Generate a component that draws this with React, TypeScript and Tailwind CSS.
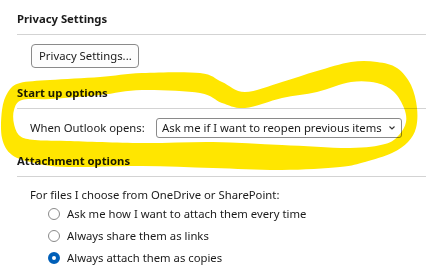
import React from 'react';

type Pt = [number, number];

// closed catmull-rom -> cubic bezier path
const smooth = (pts: Pt[]) => {
    const n = pts.length;
    let d = `M${pts[0][0]} ${pts[0][1]}`;
    for (let i = 0; i < n; i++) {
        const p0 = pts[(i - 1 + n) % n];
        const p1 = pts[i];
        const p2 = pts[(i + 1) % n];
        const p3 = pts[(i + 2) % n];
        const c1x = p1[0] + (p2[0] - p0[0]) / 6;
        const c1y = p1[1] + (p2[1] - p0[1]) / 6;
        const c2x = p2[0] - (p3[0] - p1[0]) / 6;
        const c2y = p2[1] - (p3[1] - p1[1]) / 6;
        d += ` C${c1x.toFixed(1)} ${c1y.toFixed(1)} ${c2x.toFixed(1)} ${c2y.toFixed(1)} ${p2[0]} ${p2[1]}`;
    }
    return d + ' Z';
};

const outer: Pt[] = [
    [20, 83], [50, 80], [100, 77], [142, 73], [200, 73], [222, 82], [245, 92], [282, 82],
    [317, 71], [351, 62], [377, 62], [397, 68], [411, 85], [417, 108], [416, 128], [408, 142],
    [392, 153], [365, 162], [340, 167], [282, 170], [213, 168], [142, 166], [67, 167], [35, 163],
    [12, 155], [2, 138], [2, 110], [8, 92],
];

const inner: Pt[] = [
    [22, 100], [50, 99], [100, 95], [142, 90], [200, 93], [222, 103], [245, 108], [282, 98],
    [317, 92], [351, 82], [377, 83], [394, 92], [404, 108], [406, 122], [399, 135], [385, 144],
    [350, 148], [282, 145], [213, 142], [142, 143], [67, 141], [35, 140], [20, 136], [14, 124],
    [14, 110],
];

const Highlight = () => (
    <svg
        className="pointer-events-none absolute inset-0 mix-blend-multiply"
        width="426"
        height="277"
        viewBox="0 0 426 277"
    >
        <path d={`${smooth(outer)} ${smooth(inner)}`} fill="#ffe600" fillRule="evenodd" />
    </svg>
);

const Radio = ({ checked, label }: { checked?: boolean; label: string }) => (
    <div className="flex h-[22px] items-center pl-[31px]">
        {checked ? (
            <span className="box-border h-[12px] w-[12px] rounded-full border-[4px] border-[#005fb8] bg-white" />
        ) : (
            <span className="box-border h-[12px] w-[12px] rounded-full border border-[#8a8a8a] bg-white" />
        )}
        <span className="ml-[7px]">{label}</span>
    </div>
);

export default function App() {
    return (
        <div
            className="relative h-[277px] w-[426px] overflow-hidden bg-white text-[11.3px] leading-[16px] text-[#1b1b1b]"
            style={{ fontFamily: '"Noto Sans", sans-serif' }}
        >
            <div className="pl-[17px] pt-[11px]">
                {/* Privacy */}
                <h2 className="font-bold">Privacy Settings</h2>
                <div className="mt-[7px] h-px bg-[#d3d3d3]" />
                <div className="pl-[14px] pt-[9px]">
                    <button className="flex h-[24px] w-[108px] items-center rounded-[4px] border border-[#8a8a8a] bg-[#fdfdfd] pl-[7px]">
                        Privacy Settings...
                    </button>
                </div>

                {/* Start up */}
                <h2 className="mt-[17px] font-bold">Start up options</h2>
                <div className="mt-[7px] h-px bg-[#d3d3d3]" />
                <div className="mt-[9px] flex h-[20px] items-center pl-[13px]">
                    <span className="w-[126px]">When Outlook opens:</span>
                    <div className="flex h-[20px] w-[246px] items-center justify-between rounded-[3px] border border-[#8a8a8a] pl-[5px] pr-[5px]">
                        <span>Ask me if I want to reopen previous items</span>
                        <svg width="8" height="6" viewBox="0 0 8 6">
                            <path d="M1.5 1.5 L4 4 L6.5 1.5" fill="none" stroke="#333" strokeWidth="1.1" />
                        </svg>
                    </div>
                </div>

                {/* Attachments */}
                <h2 className="mt-[15px] font-bold">Attachment options</h2>
                <div className="mt-[7px] h-px bg-[#d3d3d3]" />
                <p className="mt-[10px] pl-[13px]">For files I choose from OneDrive or SharePoint:</p>
                <Radio label="Ask me how I want to attach them every time" />
                <Radio label="Always share them as links" />
                <Radio checked label="Always attach them as copies" />
            </div>
            <Highlight />
        </div>
    );
}
